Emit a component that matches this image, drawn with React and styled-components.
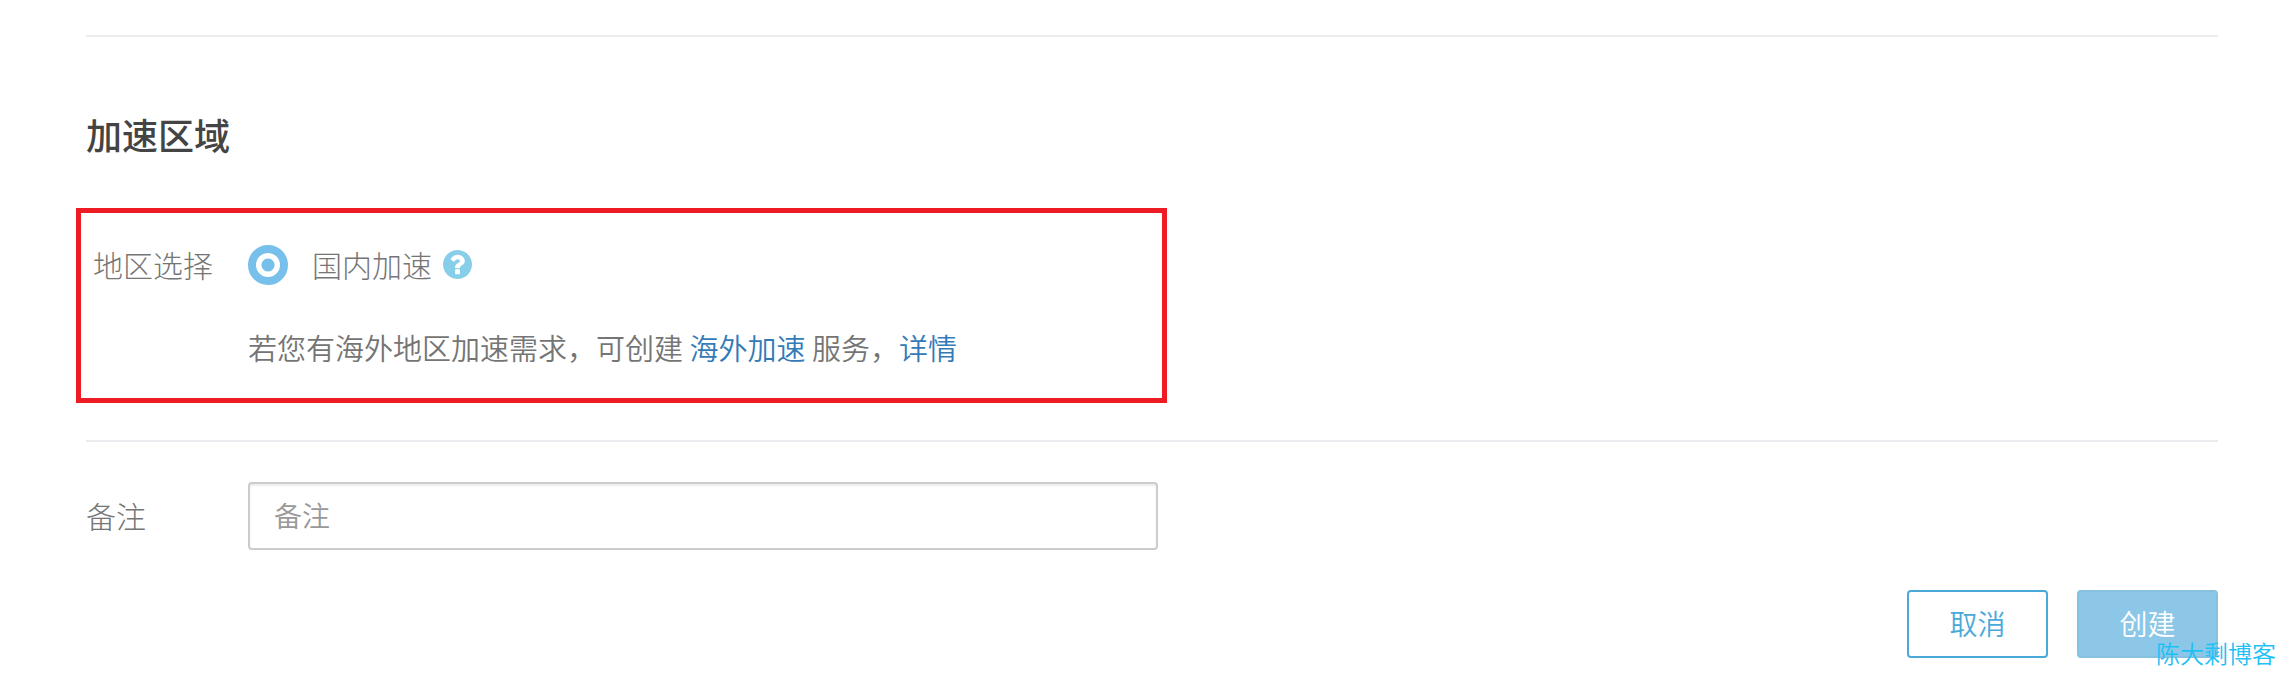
import { useState } from 'react';
import styled, { createGlobalStyle } from 'styled-components';

const GlobalStyle = createGlobalStyle`
  *, *::before, *::after {
    box-sizing: border-box;
  }

  body {
    margin: 0;
    background: #fff;
    color: #757575;
    font-family: 'Noto Sans CJK SC', sans-serif;
    font-size: 28px;
    font-weight: 350;
    line-height: 40px;
  }

  button, input {
    font: inherit;
  }
`;

const Page = styled.main`
  padding: 35px 78px 38px 86px;
`;

const Divider = styled.hr`
  height: 2px;
  margin: 0;
  border: 0;
  background: #ebebf0;
`;

const Title = styled.h2`
  margin: 77px 0 54px;
  color: #444;
  font-size: 36px;
  font-weight: 500;
  line-height: 40px;
`;

const RegionBox = styled.section`
  display: grid;
  grid-template-columns: 155px 1fr;
  row-gap: 42px;
  max-width: 1091px;
  margin: 0 0 37px -10px;
  padding: 32px 12px 31px;
  border: 5px solid #ed1c24;
`;

const Label = styled.label`
  padding-bottom: 2px;
  font-size: 30px;
  font-weight: 300;
  line-height: 38px;
`;

const Options = styled.div`
  display: flex;
  align-items: center;
`;

const Radio = styled.input`
  appearance: none;
  width: 40px;
  height: 40px;
  margin: 0 24px 0 0;
  border: 8px solid #78c0ec;
  border-radius: 50%;

  &:checked {
    background: radial-gradient(circle, #78c0ec 6px, #fff 7px);
  }
`;

const HelpButton = styled.button`
  display: flex;
  margin-left: 11px;
  padding: 0 0 2px;
  border: 0;
  background: none;
  color: #87cfe8;
  cursor: pointer;

  & svg {
    width: 29px;
    height: 29px;
    fill: currentColor;
  }
`;

const Hint = styled.p`
  grid-column: 2;
  margin: 0;
  font-size: 29px;
`;

const Link = styled.a`
  color: #337ab7;
  text-decoration: none;

  &:hover {
    text-decoration: underline;
  }
`;

const FieldRow = styled.div`
  display: grid;
  grid-template-columns: 162px minmax(0, 910px);
  align-items: center;
  margin-top: 40px;
`;

const TextInput = styled.input`
  width: 100%;
  height: 68px;
  padding: 0 24px 2px;
  border: 2px solid #ccc;
  border-radius: 4px;
  box-shadow: inset 0 2px 2px rgba(0, 0, 0, 0.075);
  color: #555;

  &::placeholder {
    color: #999;
  }
`;

const Actions = styled.div`
  position: relative;
  display: flex;
  justify-content: flex-end;
  gap: 29px;
  margin-top: 40px;
`;

const Button = styled.button`
  min-width: 141px;
  height: 68px;
  padding: 0 38px 2px;
  border: 2px solid ${props => props.$primary ? '#84c2df' : '#4aa9d9'};
  border-radius: 4px;
  background: ${props => props.$primary ? '#8cc7e7' : '#fff'};
  color: ${props => props.$primary ? '#fff' : '#4aa9d9'};
  cursor: pointer;
`;

const Watermark = styled.span`
  position: absolute;
  right: -58px;
  bottom: -15px;
  color: #1fc0f5;
  font-size: 24px;
  pointer-events: none;
`;

function HelpIcon() {
  return (
    <svg viewBox="128 128 1536 1536" aria-hidden="true">
      <path d="M1024 1376v-192q0-14-9-23t-23-9h-192q-14 0-23 9t-9 23v192q0 14 9 23t23 9h192q14 0 23-9t9-23zm256-672q0-88-55.5-163t-138.5-116-170-41q-243 0-371 213-15 24 8 42l132 100q7 6 19 6 16 0 25-12 53-68 86-92 34-24 86-24 48 0 85.5 26t37.5 59q0 38-20 61t-68 45q-63 28-115.5 86.5t-52.5 125.5v36q0 14 9 23t23 9h192q14 0 23-9t9-23q0-19 21.5-49.5t54.5-49.5q32-18 49-28.5t46-35 44.5-48 28-60.5 12.5-81zm384 192q0 209-103 385.5t-279.5 279.5-385.5 103-385.5-103-279.5-279.5-103-385.5 103-385.5 279.5-279.5 385.5-103 385.5 103 279.5 279.5 103 385.5z" />
    </svg>
  );
}

export default function App() {
  const [area, setArea] = useState('domestic');
  const [remark, setRemark] = useState('');

  return (
    <>
      <GlobalStyle />
      <Page>
        <Divider />
        <Title>加速区域</Title>
        <RegionBox>
          <Label as="span">地区选择</Label>
          <Options>
            <Radio
              type="radio"
              id="domestic"
              name="area"
              checked={area === 'domestic'}
              onChange={() => setArea('domestic')}
            />
            <Label htmlFor="domestic">国内加速</Label>
            <HelpButton type="button">
              <HelpIcon />
            </HelpButton>
          </Options>
          <Hint>
            若您有海外地区加速需求，可创建 <Link href="#overseas">海外加速</Link> 服务，<Link href="#detail">详情</Link>
          </Hint>
        </RegionBox>
        <Divider />
        <FieldRow>
          <Label htmlFor="remark">备注</Label>
          <TextInput
            id="remark"
            type="text"
            placeholder="备注"
            value={remark}
            onChange={e => setRemark(e.target.value)}
          />
        </FieldRow>
        <Actions>
          <Button type="button">取消</Button>
          <Button type="button" $primary>创建</Button>
          <Watermark>陈大剩博客</Watermark>
        </Actions>
      </Page>
    </>
  );
}
